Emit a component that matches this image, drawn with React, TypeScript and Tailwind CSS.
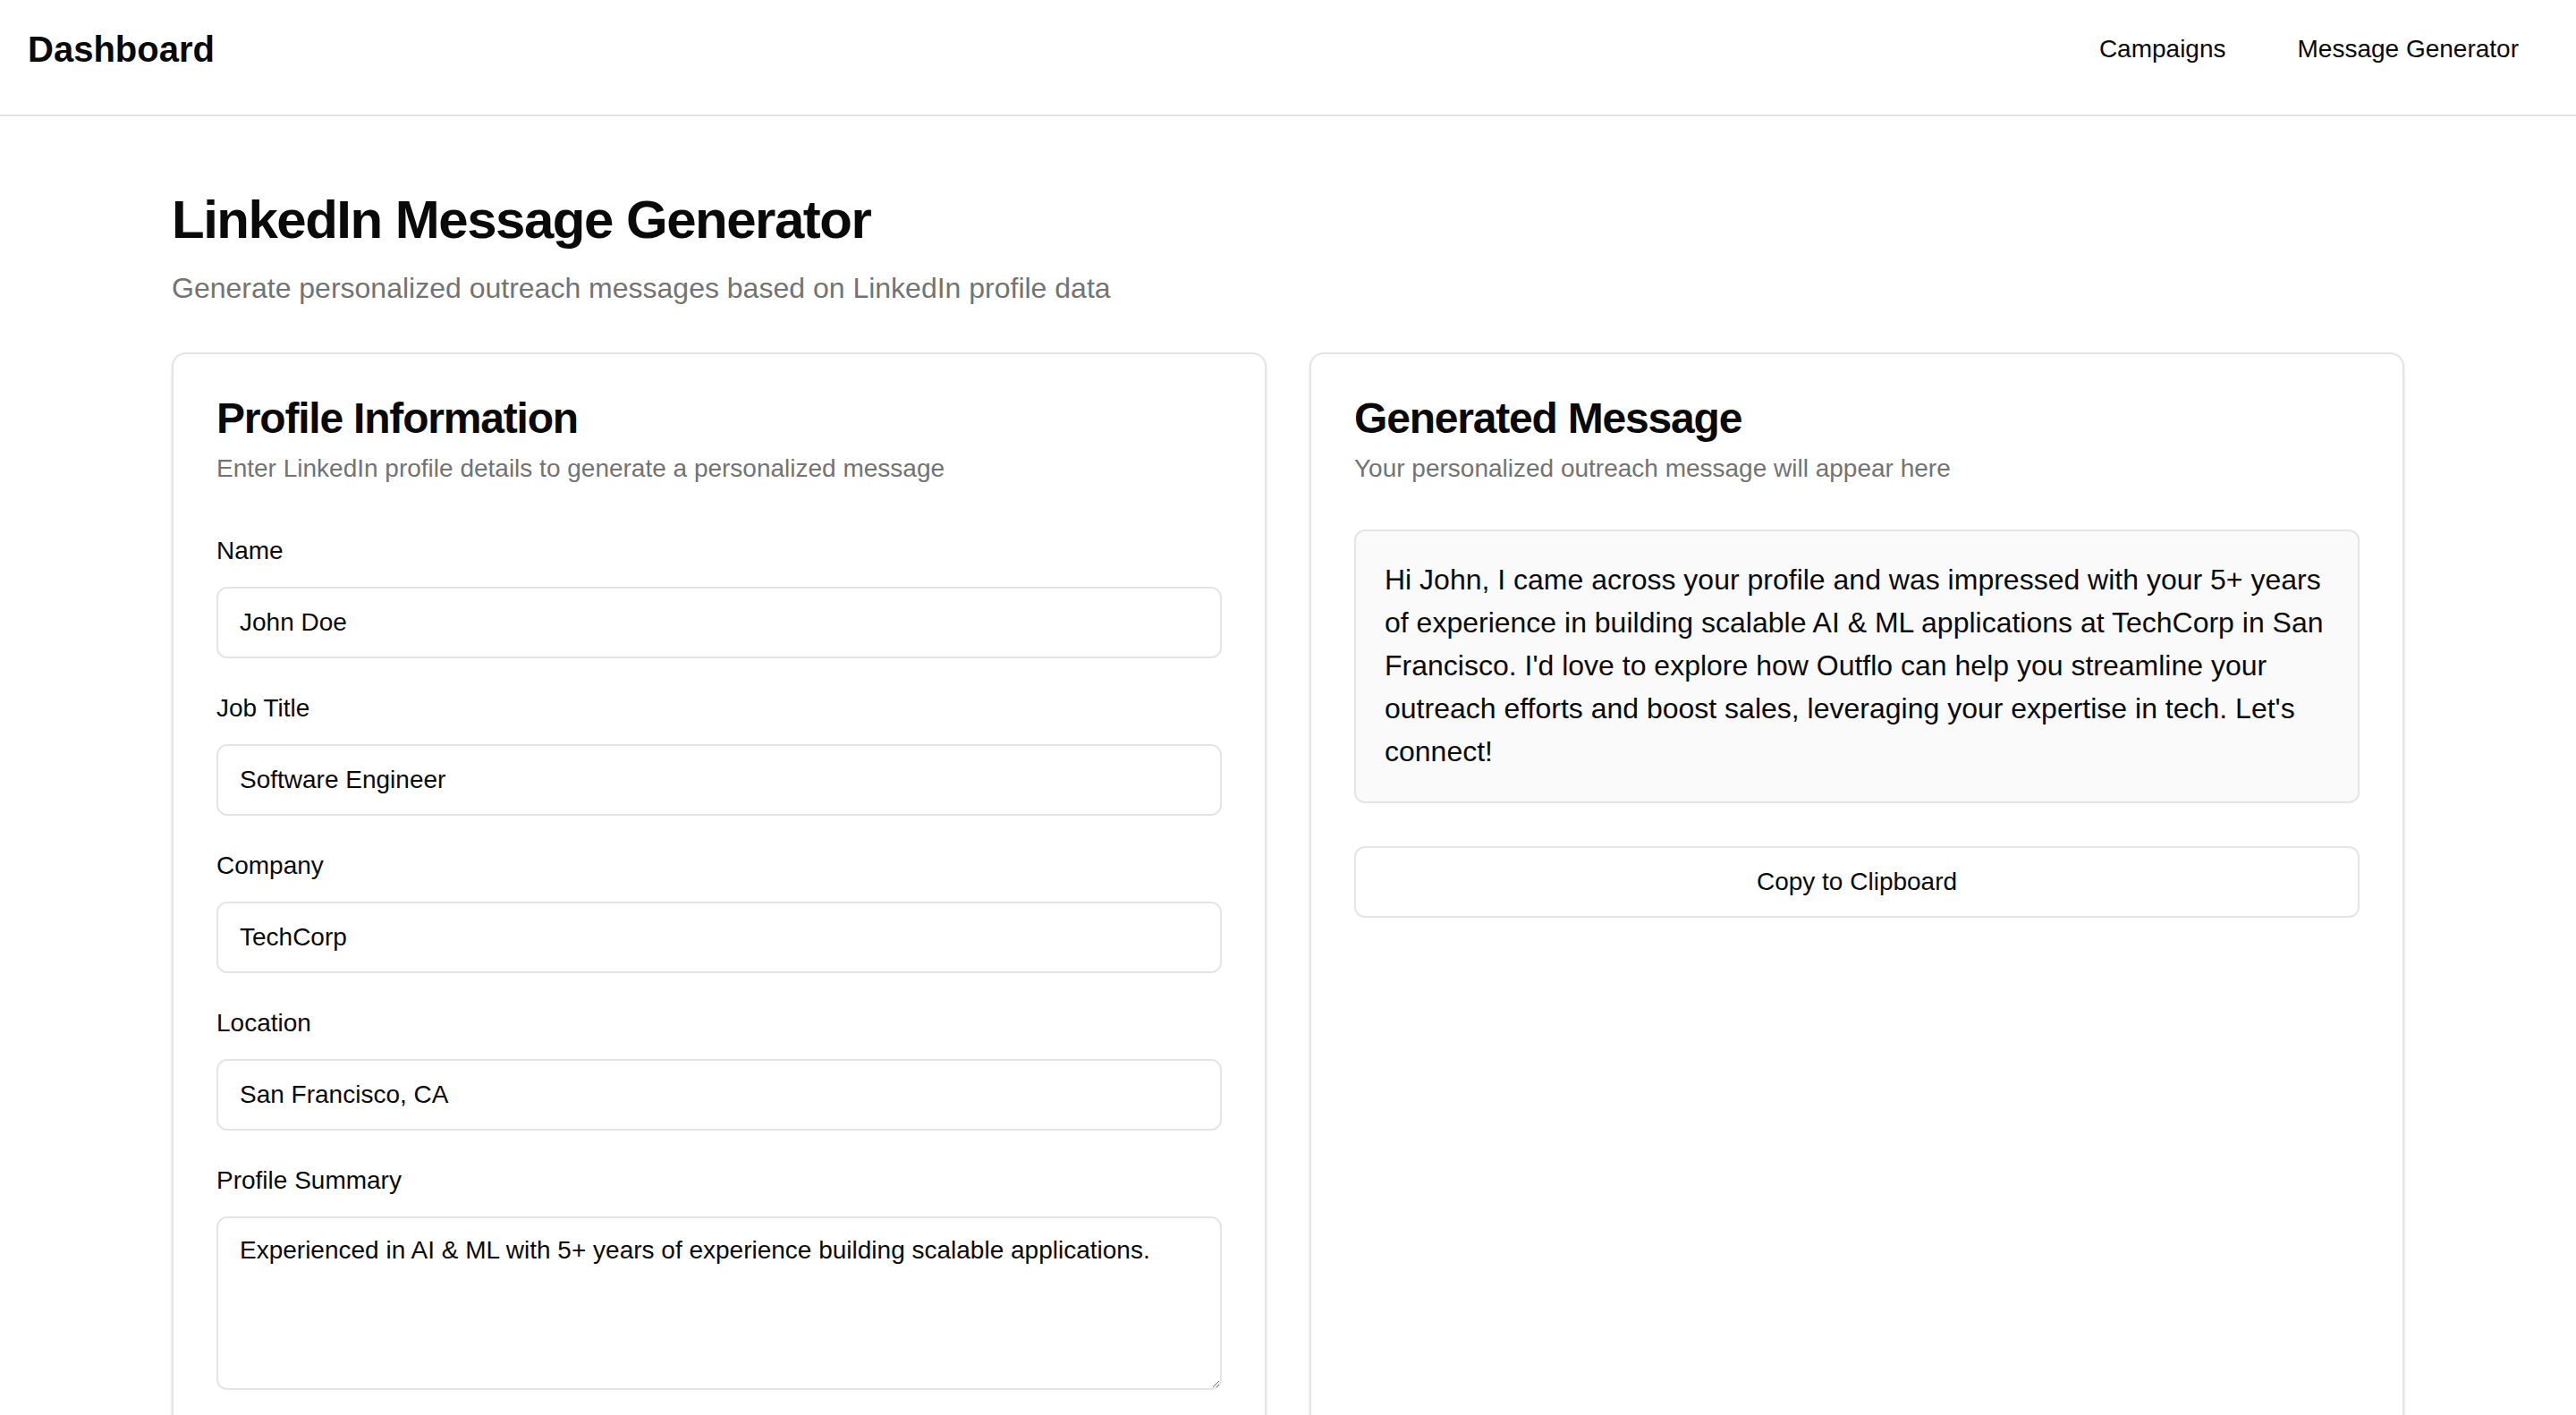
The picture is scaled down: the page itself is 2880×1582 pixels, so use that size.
import React, { useState } from 'react';

const fields = [
    { id: 'name', label: 'Name', value: 'John Doe' },
    { id: 'title', label: 'Job Title', value: 'Software Engineer' },
    { id: 'company', label: 'Company', value: 'TechCorp' },
    { id: 'location', label: 'Location', value: 'San Francisco, CA' },
];

const MESSAGE =
    "Hi John, I came across your profile and was impressed with your 5+ years of experience in building scalable AI & ML applications at TechCorp in San Francisco. I'd love to explore how Outflo can help you streamline your outreach efforts and boost sales, leveraging your expertise in tech. Let's connect!";

const Header: React.FC = () => (
    <header className="flex items-start justify-between border-b-2 border-[#e5e5e5] pl-[31px] pr-8 pt-[27px] pb-[45px]">
        <div className="text-[40px] font-bold leading-[56px] text-[#0a0a0a]">Dashboard</div>
        <nav className="flex items-center gap-4 pt-[8px]">
            <a className="px-8 text-[28px] leading-[40px] text-[#0a0a0a]">Campaigns</a>
            <a className="px-8 text-[28px] leading-[40px] text-[#0a0a0a]">Message Generator</a>
        </nav>
    </header>
);

const CardHead: React.FC<{ title: string; desc: string }> = ({ title, desc }) => (
    <div className="flex flex-col gap-3 p-12">
        <h2 className="text-[48px] font-bold leading-none tracking-[-1.2px] text-[#0a0a0a]">{title}</h2>
        <p className="text-[28px] leading-[40px] text-[#737373]">{desc}</p>
    </div>
);

export default function App() {
    const [values, setValues] = useState<Record<string, string>>(
        Object.fromEntries(fields.map(f => [f.id, f.value]))
    );
    const [summary, setSummary] = useState(
        'Experienced in AI & ML with 5+ years of experience building scalable applications.'
    );

    return (
        <div className="min-h-screen bg-white text-[#0a0a0a] font-['Liberation_Sans',Arial,sans-serif]">
            <Header />
            <main className="mx-auto max-w-[2560px] px-8 pt-20 pb-20">
                <h1 className="text-[60px] font-bold leading-[72px] tracking-[-1.5px]">LinkedIn Message Generator</h1>
                <p className="mt-4 text-[32px] leading-[48px] text-[#737373]">
                    Generate personalized outreach messages based on LinkedIn profile data
                </p>

                <div className="mt-12 grid grid-cols-2 gap-12">
                    {/* Profile form */}
                    <div className="rounded-[16px] border-2 border-[#e5e5e5] bg-white shadow-sm">
                        <CardHead
                            title="Profile Information"
                            desc="Enter LinkedIn profile details to generate a personalized message"
                        />
                        <div className="flex flex-col gap-8 px-12 pb-12">
                            {fields.map(f => (
                                <div key={f.id} className="flex flex-col gap-4">
                                    <label htmlFor={f.id} className="text-[28px] leading-[48px]">{f.label}</label>
                                    <input
                                        id={f.id}
                                        value={values[f.id]}
                                        onChange={e => setValues({ ...values, [f.id]: e.target.value })}
                                        className="h-[80px] w-full rounded-[12px] border-2 border-[#e5e5e5] bg-white px-6 text-[28px] outline-none"
                                    />
                                </div>
                            ))}
                            <div className="flex flex-col gap-4">
                                <label htmlFor="summary" className="text-[28px] leading-[48px]">Profile Summary</label>
                                <textarea
                                    id="summary"
                                    value={summary}
                                    onChange={e => setSummary(e.target.value)}
                                    className="h-[194px] w-full resize-y rounded-[12px] border-2 border-[#e5e5e5] bg-white px-6 py-4 text-[28px] leading-[40px] outline-none"
                                />
                            </div>
                        </div>
                    </div>

                    {/* Result */}
                    <div className="rounded-[16px] border-2 border-[#e5e5e5] bg-white shadow-sm">
                        <CardHead title="Generated Message" desc="Your personalized outreach message will appear here" />
                        <div className="px-12 pb-12">
                            <div className="rounded-[12px] border-2 border-[#e5e5e5] bg-[#fafafa] px-8 pt-[30px] pb-8 text-[32px] leading-[48px] whitespace-pre-wrap">
                                {MESSAGE}
                            </div>
                            <button
                                onClick={() => navigator.clipboard?.writeText(MESSAGE)}
                                className="mt-12 h-[80px] w-full rounded-[12px] border-2 border-[#e5e5e5] bg-white text-[28px] font-medium"
                            >
                                Copy to Clipboard
                            </button>
                        </div>
                    </div>
                </div>
            </main>
        </div>
    );
}
